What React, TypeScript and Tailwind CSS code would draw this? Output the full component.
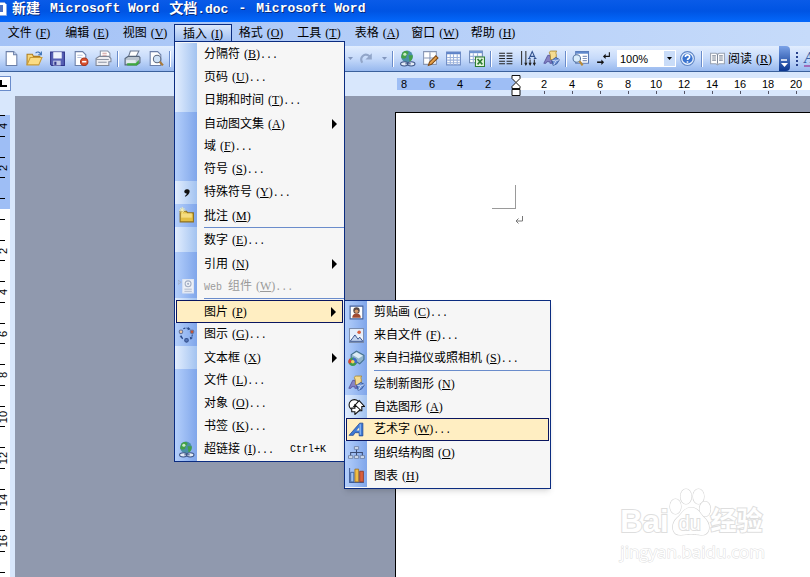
import React from 'react';

type IconProps = { children: React.ReactNode };

const Svg: React.FC<IconProps> = ({ children }) => (
  <svg width="17" height="17" viewBox="0 0 16 16" fill="none" aria-hidden="true" className="shrink-0">
    {children}
  </svg>
);

const page = <path d="M3 1.500h7l3 3v10H3z" fill="#fff" stroke="#6b7fa8" />;

const icons: Record<string, React.ReactNode> = {
  new: <Svg>{page}<path d="M10 1.500v3h3" fill="#c9d8f2" stroke="#6b7fa8" /></Svg>,
  open: (
    <Svg>
      <path d="M1 14V4h5l1 2h6v3" fill="#f6d67a" stroke="#b07d1c" />
      <path d="M1 14l3-7h11l-3 7z" fill="#fbdc84" stroke="#c99a35" />
      <path d="M9 3c2-2 4-1 5 1M14.500 1.500v3h-3" stroke="#3f74b8" />
    </Svg>
  ),
  save: (
    <Svg>
      <path d="M1.500 2h13v12.500h-12l-1-1z" fill="#5660b4" stroke="#30358a" />
      <path d="M4 2h8v6H4z" fill="#eef3fc" />
      <path d="M4 10h7v4.500H4z" fill="#c5cce8" />
      <path d="M5 11h2v3H5z" fill="#30358a" />
    </Svg>
  ),
  permission: (
    <Svg>
      {page}
      <path d="M5 5h5M5 7h4" stroke="#b6c2dc" />
      <circle cx="11.500" cy="11" r="3.500" fill="#d9502e" stroke="#a8331a" />
      <path d="M9.500 11h4" stroke="#fff" strokeWidth="1.500" />
    </Svg>
  ),
  mail: (
    <Svg>
      <path d="M5 1h7l2 2v5H5z" fill="#fff" stroke="#8a94a8" />
      <path d="M1 8l3-2h9l2 2v3h-2v3.500H1z" fill="#eeeef2" stroke="#7f8798" />
      <path d="M1 9h12M3 11.500h8" stroke="#8d95a5" />
      <path d="M7 3h4M7 5h4" stroke="#cf9d9d" />
    </Svg>
  ),
  print: (
    <Svg>
      <path d="M6 1h8l-3 6H4z" fill="#fff" stroke="#6a7890" />
      <path d="M1 8l3-2h10l1 1v5l-3 2H1z" fill="#b9c4cf" stroke="#55657a" />
      <path d="M2 9.500h9v3H2z" fill="#e4ebf0" />
      <path d="M3 12.500h8l3-3v3l-2 2H3z" fill="#3fa83f" />
    </Svg>
  ),
  preview: (
    <Svg>
      {page}
      <circle cx="9.500" cy="8.500" r="3.500" fill="#cfe2f7" stroke="#5e6a80" />
      <path d="M12 11l3 3.500" stroke="#a97a3a" strokeWidth="2" />
    </Svg>
  ),
  redo: (
    <Svg>
      <path d="M4 12C1 7 6 2 11 6" stroke="#92a6c9" strokeWidth="2" />
      <path d="M13 3v6H7z" fill="#92a6c9" />
    </Svg>
  ),
  link: (
    <Svg>
      <circle cx="7.500" cy="6" r="5.500" fill="#4b8fa8" />
      <path d="M3 3c2-3 5-2 6-1 0 2-2 2-2 4s-3 3-5 1zM9 5l4 0c0 3-1 5-3 6z" fill="#43a047" />
      <circle cx="5.500" cy="4" r="1.500" fill="#c8ecc4" />
      <ellipse cx="5" cy="13" rx="3.500" ry="2" fill="#e4ecf8" stroke="#3b5384" />
      <ellipse cx="11.500" cy="13" rx="3.500" ry="2" fill="#e4ecf8" stroke="#3b5384" />
      <path d="M6 13h5" stroke="#3b5384" />
    </Svg>
  ),
  borders: (
    <Svg>
      <path d="M1.500 1.500h12v12h-12z" fill="#fff" stroke="#8796b5" />
      <path d="M7.500 2v11M2 7.500h11" stroke="#8796b5" />
      <path d="M6 14.500l1-3 6-6 2 2-6 6z" fill="#e6a04a" stroke="#7d4a16" />
    </Svg>
  ),
  table: (
    <Svg>
      <path d="M1.500 2h13v12h-13z" fill="#fff" stroke="#6c8ac4" />
      <path d="M1.500 2h13v2h-13z" fill="#5f84c8" />
      <path d="M5 4v10M8 4v10M11.500 4v10M2 7h12M2 9.500h12M2 12h12" stroke="#9db3dc" />
    </Svg>
  ),
  excel: (
    <Svg>
      <path d="M1.500 1h12v11h-12z" fill="#fff" stroke="#6c86b4" />
      <path d="M1.500 1h12v2h-12z" fill="#6f94d0" />
      <path d="M5 3v9M9 3v9M2 6h11M2 9h11" stroke="#9db3dc" />
      <path d="M7 6.500h8.500v9H7z" fill="#e3f5dc" stroke="#2e7d32" />
      <path d="M9 8.500l4.500 5M13.500 8.500L9 13.500" stroke="#2e7d32" strokeWidth="1.500" />
    </Svg>
  ),
  columns: (
    <Svg>
      <path d="M2 3h5.500M2 5.500h5.500M2 8h5.500M2 10.500h5.500M2 13h5.500M9 3h5.500M9 5.500h5.500M9 8h5.500M9 10.500h5.500M9 13h5.500" stroke="#222" />
    </Svg>
  ),
  direction: (
    <Svg>
      <path d="M1.500 1v13M5.500 1v13M9.500 9v5M13.500 9v5" stroke="#333" />
      <path d="M4 12h3l-1.500 3zM8 12h3l-1.500 3zM12 12h3l-1.500 3z" fill="#222" />
      <path d="M8.500 8l3-6.500 3 6.500M9.500 6h4M7.500 8h2.500M13 8h2.500" stroke="#33538f" />
    </Svg>
  ),
  drawing: (
    <Svg>
      <path d="M.8 12.500L4.500 5h2l2 7.500H6.500V11H3.500l-.7 1.500z" fill="#8583c4" stroke="#55539c" strokeWidth=".8" />
      <path d="M6 2.500c0-1.200 1-1.500 2-1.500h5c-1 1-1 2-.5 3v5H7V5z" fill="#f5dc92" stroke="#a8862f" strokeWidth=".8" />
      <path d="M8.500 9.500L12 7l3.500 2-2.500 4-3.500 1.500z" fill="#6f94d8" stroke="#2f4f92" strokeWidth=".8" />
      <path d="M8.500 9.500l3.500.8 3.500-1.300M12 10.300l-2 4" stroke="#d4e2f8" strokeWidth=".8" />
    </Svg>
  ),
  map: (
    <Svg>
      <path d="M3.500 1.500h12v11h-12z" fill="#fff" stroke="#5878b4" />
      <path d="M3.500 1.500h12v2h-12z" fill="#5f88cc" />
      <path d="M10 6h4M10 8h4M10 10h4" stroke="#8295bd" />
      <circle cx="4.500" cy="8" r="3.500" fill="#d9ecfb" stroke="#53729e" />
      <path d="M7 10.500l3 4" stroke="#b88a3a" strokeWidth="2" />
    </Svg>
  ),
  marks: (
    <Svg>
      <path d="M13.500 2v4H9" stroke="#111" />
      <path d="M10 3.500v5L7.500 6z" fill="#111" />
      <path d="M2 11.500h5" stroke="#111" strokeWidth="1.500" />
      <path d="M6 9v5l2.500-2.500z" fill="#111" />
    </Svg>
  ),
  help: (
    <Svg>
      <circle cx="8" cy="8" r="6.500" fill="#e8f1fd" stroke="#5d84c4" />
      <circle cx="8" cy="8" r="4.800" fill="#3a73cf" />
      <path d="M6 6.500c0-2.500 4-2.500 4 0 0 1.500-2 1.500-2 3M8 10.500v1.500" stroke="#fff" strokeWidth="1.500" />
    </Svg>
  ),
  read: (
    <Svg>
      <path d="M1.500 3h5L8 4l1.500-1h5v10h-5L8 14l-1.500-1h-5z" fill="#fff" stroke="#98a2b2" />
      <path d="M8 4v9M3 5.500h3.500M3 7.500h3.500M3 9.500h3.500M9.500 5.500H13M9.500 7.500H13M9.500 9.500H13" stroke="#7d8798" />
    </Svg>
  ),
  comma: <Svg><path d="M8.300 5c3.400-.5 4.200 4-1.300 7l-.6-.7c1.500-1 2-1.800 1.800-2.400C5 9 5.300 5.300 8.300 5z" fill="#111" /></Svg>,
  comment: (
    <Svg>
      <path d="M2 4h6l1 1.500h5.500V14H2z" fill="#e3bf45" stroke="#8d7020" />
      <path d="M3 6h10v4H3z" fill="#f5dd80" />
      <path d="M4 0v6M1 3h6M2 1l4 4M6 1L2 5" stroke="#fff5a8" strokeWidth=".8" />
    </Svg>
  ),
  web: (
    <Svg>
      <path d="M4.500 1.500h10v12.500h-10z" fill="#eef1f7" stroke="#dfe6f2" />
      <circle cx="9.500" cy="5.500" r="2.800" stroke="#a3aec4" />
      <circle cx="9.500" cy="5.500" r="1" fill="#a3aec4" />
      <path d="M6 10.500h7M6 12.500h7M0 2l3 2-3 2z" stroke="#a3aec4" strokeWidth=".8" />
    </Svg>
  ),
  diagram: (
    <Svg>
      <path d="M5 2.500A6 6 0 0110 2.500M13.500 8a6 6 0 01-2 4M4.500 12A6 6 0 012.500 9" stroke="#2c4c8c" strokeDasharray="2 1" />
      <circle cx="2.800" cy="5.500" r="1.700" fill="#f0c9a0" stroke="#68759a" />
      <circle cx="13.200" cy="5.500" r="1.700" fill="#c8502e" stroke="#68759a" />
      <circle cx="8" cy="13.500" r="1.700" fill="#5577bb" stroke="#34508c" />
      <path d="M9.500 1l2.500 2-3 1zM1.500 10l2-1 1 3zM12 13l-1-3 3 1z" fill="#2c4c8c" />
    </Svg>
  ),
  clip: (
    <Svg>
      <path d="M2 2h12v12H2z" fill="#fff" stroke="#44619c" />
      <circle cx="8" cy="6" r="3" fill="#5b4a45" />
      <circle cx="8" cy="6.800" r="1.700" fill="#d99b6c" />
      <path d="M4 13c0-3 2-4 4-4s4 1 4 4z" fill="#a04a30" />
    </Svg>
  ),
  picture: (
    <Svg>
      <path d="M1.500 1.500h13v13h-13z" fill="#fff" stroke="#7b8dae" />
      <path d="M2 2h12v7H2z" fill="#e4edfb" />
      <circle cx="10.500" cy="5" r="1.700" fill="#d9603e" />
      <path d="M2 13.500l4.500-6 3 4 1.500-2 3 4z" fill="#c3d3ee" stroke="#34508c" strokeWidth=".9" />
    </Svg>
  ),
  scanner: (
    <Svg>
      <path d="M3 4.500L8 1l7 4v4l-4 4-8-5z" fill="#8fb4cc" stroke="#44708c" />
      <path d="M4 4.500l4-2.500 6 3.500-4 2.500z" fill="#dcebf5" />
      <circle cx="4.500" cy="11" r="4" fill="#3f9b4e" />
      <path d="M4.500 11V7a4 4 0 013.500 6z" fill="#3f67cc" />
      <path d="M4.500 11L1 13a4 4 0 01.5-5z" fill="#dc4434" />
      <circle cx="4.500" cy="11" r="1.700" fill="#f3d35a" />
    </Svg>
  ),
  shapes: (
    <Svg>
      <circle cx="6" cy="6.500" r="5" fill="#fff" stroke="#111" />
      <path d="M10.500 2.500l5 5.500h-2.500v4H8V8H5.500z" fill="#fff" stroke="#111" />
      <path d="M6.500 6.500l5 4.500-5 4.500V13H3.500V9.500h3z" fill="#fff" stroke="#111" />
    </Svg>
  ),
  wordart: (
    <Svg>
      <path d="M1 13.500L11 2h3v12h-3.500v-3H6.500L5 13.500z" fill="#3f7ad6" stroke="#1e458f" strokeWidth=".7" />
      <path d="M8 9h2.500V6z" fill="#fff0c8" />
      <path d="M11.500 3v10" stroke="#9cc2f5" />
    </Svg>
  ),
  org: (
    <Svg>
      <path d="M8 5v3M2.500 11V8h11v3M8 8v3" stroke="#3c4d75" />
      <path d="M6 2.500h4v2.500H6zM.5 11h4v2.500h-4zM6 11h4v2.500H6zM11.500 11h4v2.500h-4z" fill="#dbe5f5" stroke="#6a7c9e" strokeWidth=".8" />
    </Svg>
  ),
  chart: (
    <Svg>
      <path d="M1.500 1v13.500H15" stroke="#44619c" />
      <path d="M2.500 5h3v9h-3z" fill="#9fc0ee" stroke="#254c8c" strokeWidth=".7" />
      <path d="M6.500 2h3.500v12H6.500z" fill="#f1bd45" stroke="#94661a" strokeWidth=".7" />
      <path d="M11 4h3.500v10H11z" fill="#d9603e" stroke="#8c2f18" strokeWidth=".7" />
    </Svg>
  ),
};

// Latin part of a label: "(F)", "(F)..." with the access key underlined
const Label: React.FC<{ text: string; accessKey?: string; more?: boolean }> = ({ text, accessKey, more }) => (
  <span className="whitespace-pre">
    {text}
    {accessKey && (
      <span className="ml-[4px] font-['Liberation_Serif',serif]">
        (<u className="underline-offset-1">{accessKey}</u>)
      </span>
    )}
    {more && <span className="font-['Liberation_Mono',monospace] text-[10px]">...</span>}
  </span>
);

const LIGHT = 'from-[#e3eefe] to-[#a3c3f0]';
const DARK = 'from-[#b4cffb] to-[#80a6ea]';

interface Item {
  text: string;
  keyName: string;
  more?: boolean;
  arrow?: boolean;
  disabled?: boolean;
  active?: boolean;
  icon?: string;
  shortcut?: string;
  strip: string;
  line?: boolean;
}

const insertItems: Item[] = [
  { text: '分隔符', keyName: 'B', more: true, strip: LIGHT },
  { text: '页码', keyName: 'U', more: true, strip: LIGHT },
  { text: '日期和时间', keyName: 'T', more: true, strip: LIGHT },
  { text: '自动图文集', keyName: 'A', arrow: true, strip: DARK },
  { text: '域', keyName: 'F', more: true, strip: DARK },
  { text: '符号', keyName: 'S', more: true, strip: DARK },
  { text: '特殊符号', keyName: 'Y', more: true, icon: 'comma', strip: LIGHT },
  { text: '批注', keyName: 'M', icon: 'comment', strip: DARK },
  { text: '数字', keyName: 'E', more: true, strip: LIGHT, line: true },
  { text: '引用', keyName: 'N', arrow: true, strip: DARK },
  { text: 'Web 组件', keyName: 'W', more: true, disabled: true, icon: 'web', strip: DARK },
  { text: '图片', keyName: 'P', arrow: true, active: true, strip: LIGHT, line: true },
  { text: '图示', keyName: 'G', more: true, icon: 'diagram', strip: DARK },
  { text: '文本框', keyName: 'X', arrow: true, strip: LIGHT },
  { text: '文件', keyName: 'L', more: true, strip: DARK },
  { text: '对象', keyName: 'O', more: true, strip: DARK },
  { text: '书签', keyName: 'K', more: true, strip: DARK },
  { text: '超链接', keyName: 'I', more: true, icon: 'link', shortcut: 'Ctrl+K', strip: DARK },
];

const pictureItems: Item[] = [
  { text: '剪贴画', keyName: 'C', more: true, icon: 'clip', strip: DARK },
  { text: '来自文件', keyName: 'F', more: true, icon: 'picture', strip: DARK },
  { text: '来自扫描仪或照相机', keyName: 'S', more: true, icon: 'scanner', strip: DARK },
  { text: '绘制新图形', keyName: 'N', icon: 'drawing', strip: DARK, line: true },
  { text: '自选图形', keyName: 'A', icon: 'shapes', strip: LIGHT },
  { text: '艺术字', keyName: 'W', more: true, icon: 'wordart', active: true, strip: DARK },
  { text: '组织结构图', keyName: 'O', icon: 'org', strip: DARK },
  { text: '图表', keyName: 'H', icon: 'chart', strip: DARK },
];

const MenuRow: React.FC<{ item: Item }> = ({ item }) => (
  <>
    {item.line && (
      <li role="separator" className="flex h-[2px]">
        <span className={`w-[22px] bg-linear-to-r ${item.strip}`} />
        <span className="ml-[7px] h-px flex-1 bg-[#6a8ccb]" />
      </li>
    )}
    <li className={`relative ${item.active ? 'px-px' : ''}`}>
      <button
        disabled={item.disabled}
        className={`flex h-[23px] w-full items-center text-left ${item.disabled ? 'text-[#9a9a9a]' : 'text-black'} ${
          item.active ? 'bg-[#ffeec2] outline outline-[#0a1660] -outline-offset-1' : ''
        }`}
      >
        <span
          className={`flex h-full shrink-0 items-center justify-center ${
            item.active ? 'w-[21px]' : `w-[22px] bg-linear-to-r ${item.strip}`
          }`}
        >
          {item.icon && icons[item.icon]}
        </span>
        <span className="flex-1 pl-[7px]">
          {item.text.startsWith('Web') ? (
            <>
              <span className="whitespace-pre font-['Liberation_Mono',monospace] text-[10px]">Web </span>
              <Label text="组件" accessKey={item.keyName} more={item.more} />
            </>
          ) : (
            <Label text={item.text} accessKey={item.keyName} more={item.more} />
          )}
        </span>
        {item.shortcut && (
          <span className="pr-[18px] font-['Liberation_Mono',monospace] text-[10px]">{item.shortcut}</span>
        )}
        {item.arrow && (
          <svg width="5" height="10" viewBox="0 0 5 10" className="mr-[7px]" aria-hidden="true">
            <path d="M0 0l5 5-5 5z" fill="#000" />
          </svg>
        )}
      </button>
      {item.arrow && item.active && (
        <ul className="absolute left-full top-0 w-[207px] border border-[#0b2c80] bg-[#f6f6f6] pb-px shadow-md">
          {pictureItems.map((sub) => (
            <MenuRow key={sub.text} item={sub} />
          ))}
        </ul>
      )}
    </li>
  </>
);

const menus = [
  ['文件', 'F'],
  ['编辑', 'E'],
  ['视图', 'V'],
  ['插入', 'I'],
  ['格式', 'O'],
  ['工具', 'T'],
  ['表格', 'A'],
  ['窗口', 'W'],
  ['帮助', 'H'],
];

const Tool: React.FC<{ name: string }> = ({ name }) => (
  <button aria-label={name} className="flex h-full w-[23px] shrink-0 items-center justify-center">
    {icons[name]}
  </button>
);

const Divider = () => (
  <span className="flex h-4 w-[6px] shrink-0 justify-center">
    <span className="w-px bg-[#6a8ccb]" />
    <span className="w-px bg-white" />
  </span>
);

const Caret: React.FC<{ color: string }> = ({ color }) => (
  <svg width="5" height="3" viewBox="0 0 5 3" aria-hidden="true">
    <path d="M0 0h5L2.500 3z" fill={color} />
  </svg>
);

const Toolbar = () => (
  <div className="flex h-[26px] shrink-0 items-center overflow-hidden border-b border-[#3b619c] bg-linear-to-b from-[#e2edfe] via-[#c6dafa] to-[#97b8ee]">
    {['new', 'open', 'save', 'permission', 'mail'].map((n) => <Tool key={n} name={n} />)}
    <Divider />
    <Tool name="print" />
    <Tool name="preview" />
    <Divider />
    <span className="w-[172px] shrink-0" />
    <button aria-label="undo list" className="flex w-[10px] shrink-0 justify-center"><Caret color="#8296bd" /></button>
    <Tool name="redo" />
    <button aria-label="redo list" className="flex w-3 shrink-0 justify-center"><Caret color="#8296bd" /></button>
    <Divider />
    {['link', 'borders', 'table', 'excel'].map((n) => <Tool key={n} name={n} />)}
    <Divider />
    {['columns', 'direction', 'drawing'].map((n) => <Tool key={n} name={n} />)}
    <Divider />
    <Tool name="map" />
    <Tool name="marks" />
    <span className="ml-[2px] flex h-[17px] w-[59px] shrink-0 items-center border border-white bg-white">
      <select
        aria-label="zoom"
        className="min-w-0 flex-1 appearance-none bg-white pl-[2px] font-['Liberation_Sans',sans-serif] text-[11px] leading-[14px] outline-none"
      >
        <option>100%</option>
      </select>
      <span className="flex h-full w-[11px] items-center justify-center bg-[#c9dcf8]"><Caret color="#000" /></span>
    </span>
    <Tool name="help" />
    <Divider />
    <button className="flex shrink-0 items-center gap-[2px] pl-1">
      {icons.read}
      <Label text="阅读" accessKey="R" />
    </button>
    <span className="min-w-[7px] max-w-[7px] flex-1" />
    <button aria-label="more buttons" className="flex h-full w-[11px] shrink-0 items-end justify-center rounded-r bg-linear-to-b from-[#7ba2e7] to-[#0a3590] pb-1">
      <svg width="7" height="8" viewBox="0 0 7 8" aria-hidden="true">
        <path d="M0 1h6" stroke="#fff" strokeWidth="1.500" />
        <path d="M0 4h7L3.500 8z" fill="#fff" />
      </svg>
    </button>
    <span className="ml-[6px] flex shrink-0 flex-col gap-[2px]">
      <i className="size-[2px] bg-[#27418c]" />
      <i className="size-[2px] bg-[#27418c]" />
      <i className="size-[2px] bg-[#27418c]" />
      <i className="size-[2px] bg-[#27418c]" />
    </span>
    <span className="ml-[6px] shrink-0 border-b-2 border-[#a06ab8] font-['Liberation_Serif',serif] text-[16px] font-bold italic leading-[15px] text-[#3a62a8]">A</span>
  </div>
);

const HorizontalRuler = () => (
  <div className="flex h-[24px] shrink-0 bg-[#d8e7fc] font-['Liberation_Sans',sans-serif] text-[11px] leading-[12px]">
    <span className="mt-[4px] flex h-[15px] w-[11px] items-center justify-start border border-l-0 border-[#6a8ccb] bg-white">
      <svg width="7" height="7" viewBox="0 0 7 7" aria-hidden="true">
        <path d="M1 0v6h6" stroke="#000" strokeWidth="2" fill="none" />
      </svg>
    </span>
    <div className="relative ml-[386px] mt-[6px] flex h-[12px] w-[118px] shrink-0 bg-[#9ebef5] text-center">
      <span className="mr-[7px] w-[14px]">8</span>
      <span className="w-7">6</span>
      <span className="w-7">4</span>
      <span className="w-7">2</span>
      <svg width="10" height="21" viewBox="0 0 10 21" className="absolute -right-[6px] -top-[3px] z-10" aria-hidden="true">
        <path d="M1 .5h8v3l-4 4-4-4zM5 7.500l4 4v2H1v-2zM1 14.500h8v6H1z" fill="#fff" stroke="#111" />
      </svg>
    </div>
    <div className="min-w-0 flex-1 overflow-hidden pt-[6px]">
      <div className="flex h-[12px] bg-white pl-[15px] text-center">
        {[2, 4, 6, 8, 10, 12, 14, 16, 18, 20].map((n) => (
          <span key={n} className="w-7 shrink-0">{n}</span>
        ))}
      </div>
      <div className="flex h-[4px] pl-[15px] pt-px">
        {[2, 4, 6, 8, 10, 12, 14, 16, 18, 20].map((n) => (
          <span key={n} className="flex w-7 shrink-0 justify-center"><i className="w-px bg-[#556]" /></span>
        ))}
      </div>
    </div>
  </div>
);

const RulerMark: React.FC<{ n: number }> = ({ n }) => (
  <div className="flex h-[41px] shrink-0 flex-col justify-between py-[10px] odd:h-[42px]">
    <i className="h-px w-[5px] bg-black" />
    <span className="flex h-[6px] w-[7px] items-center justify-center">
      <span className="-rotate-90">{n}</span>
    </span>
    <i className="h-px w-[5px] bg-black" />
  </div>
);

const VerticalRuler = () => (
  <div className="flex w-[15px] shrink-0 flex-col overflow-hidden bg-[#d8e7fc] pt-[19px] font-['Liberation_Sans',sans-serif] text-[11px] leading-[12px]">
    <div className="flex h-[94px] w-[10px] shrink-0 flex-col justify-end overflow-hidden bg-[#9ebef5]">
      <RulerMark n={4} />
      <RulerMark n={2} />
      <i className="mb-[10px] mt-[10px] h-px w-[5px] shrink-0 bg-black" />
    </div>
    <div className="flex w-[10px] flex-1 flex-col overflow-hidden bg-white">
      <i className="mb-[10px] mt-[10px] h-px w-[5px] shrink-0 bg-black" />
      {[2, 4, 6, 8, 10, 12, 14, 16, 18].map((n) => <RulerMark key={n} n={n} />)}
    </div>
  </div>
);

const Watermark = () => (
  <div className="absolute bottom-[14px] right-[45px] font-['Liberation_Sans','Noto_Sans_CJK_SC',sans-serif] font-bold text-white [-webkit-text-stroke:2px_#dedede] [paint-order:stroke]">
    <div className="flex items-end">
      <span className="text-[31px] leading-[28px]">Bai</span>
      <span className="relative flex h-[48px] w-[42px] items-end justify-center pb-[2px]">
        <svg width="42" height="48" viewBox="0 0 42 48" className="absolute inset-0" aria-hidden="true">
          <g fill="#fff" stroke="#d6d6d6" strokeWidth="1.200">
            <ellipse cx="6.500" cy="18.500" rx="5.500" ry="7.500" />
            <ellipse cx="17" cy="8.500" rx="5.500" ry="7.500" />
            <ellipse cx="29.500" cy="8.500" rx="5.500" ry="7.500" />
            <ellipse cx="36" cy="21" rx="5.500" ry="7.500" />
            <path d="M22 19.500c7 0 9 6 13 10 8 7 6 18-3 17.500-5-.3-6-1-10-1s-5 .7-10 1C3 47.500 1 37 8 30c5-4 7-10.500 14-10.500z" />
          </g>
        </svg>
        <span className="relative text-[20px] font-normal leading-[22px]">du</span>
      </span>
      <span className="text-[26px] leading-[30px]">经验</span>
    </div>
    <div className="pt-[4px] font-['Open_Sans',sans-serif] text-[17px] font-normal leading-[23px] [-webkit-text-stroke:1px_#dedede]">jingyan.baidu.com</div>
  </div>
);

const App = () => (
  <div className="flex h-screen flex-col overflow-hidden bg-[#9099ae] font-['Liberation_Sans','Noto_Sans_CJK_SC',sans-serif] text-[12px] leading-[16px]">
    <header className="flex h-[22px] shrink-0 items-center bg-linear-to-b from-[#0a5be8] via-[#0054e3] to-[#0468fb] pb-1 font-['Liberation_Mono','Noto_Sans_CJK_SC',monospace] text-[13px] font-bold text-white [text-shadow:1px_1px_#0a2a7a]">
      <svg width="8" height="16" viewBox="0 0 8 16" className="mr-1" aria-hidden="true">
        <path d="M-1 1.500h5.500l2 2v11H-1z" fill="#fff" stroke="#8aa8e0" />
        <path d="M-1 4h4v7h-4z" fill="#4b6fc4" />
      </svg>
      <h1 className="flex gap-[10px] whitespace-pre">
        <span className="text-[14px]">新建</span>
        <span>Microsoft Word</span>
        <span><span className="text-[14px]">文档</span>.doc</span>
        <span>-</span>
        <span>Microsoft Word</span>
      </h1>
    </header>

    <nav className="flex h-[24px] shrink-0 bg-linear-to-r from-[#a4c2f6] to-[#c6dbfa] pt-[2px]">
      {menus.map(([text, keyName]) => {
        const open = text === '插入';
        return (
          <div key={text} className="relative h-[18px]">
            <button
              className={`flex h-full w-[58px] items-center justify-center border ${
                open ? 'border-b-0 border-[#0b2c80] bg-linear-to-b from-[#dbe8fb] to-[#9dbcf0]' : 'border-transparent'
              }`}
            >
              <Label text={text} accessKey={keyName} />
            </button>
            {open && (
              <ul className="absolute left-0 top-[17px] z-20 w-[171px] border border-[#0b2c80] bg-[#f6f6f6] pt-px">
                {insertItems.map((item) => (
                  <MenuRow key={item.text} item={item} />
                ))}
              </ul>
            )}
          </div>
        );
      })}
    </nav>

    <Toolbar />
    <HorizontalRuler />

    <main className="flex min-h-0 flex-1">
      <VerticalRuler />
      <div className="min-w-0 flex-1 pl-[380px] pt-4">
        <section className="relative h-full border-l border-t border-black bg-white pl-[96px] pt-[72px]">
          <div className="h-6 w-6 border-b border-r border-[#9a9a9a]" />
          <svg width="9" height="9" viewBox="0 0 9 9" fill="none" className="ml-[23px] mt-[7px]" aria-hidden="true">
            <path d="M7.500 0v5H1M3.500 2.500L1 5l2.500 2.500" stroke="#777" />
          </svg>
          <Watermark />
        </section>
      </div>
    </main>
  </div>
);

export default App;
